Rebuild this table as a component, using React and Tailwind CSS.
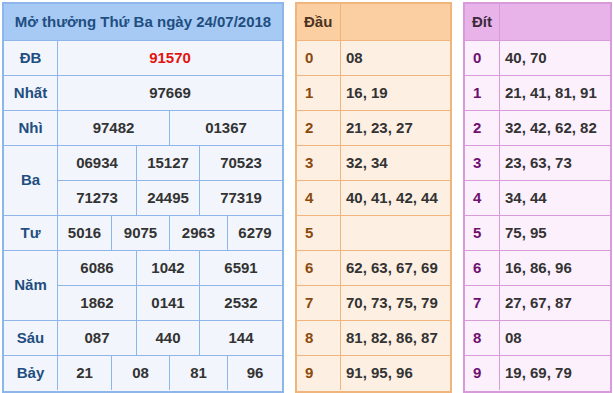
import React from "react";

const F = { fontFamily: '"Liberation Sans", Arial, sans-serif' };

function Cell({ children, className = "" }) {
  return (
    <div className={"flex items-center justify-center " + className}>{children}</div>
  );
}

function MainRow({ label, rows, cols, last }) {
  return (
    <div className={"flex " + (last ? "" : "border-b border-[#8fb6ea]")}>
      <div className="w-[54px] shrink-0 flex items-center justify-center border-r border-[#8fb6ea] text-[#1f4e80]">
        {label}
      </div>
      <div className="flex-1 flex flex-col">
        {rows.map((r, i) => (
          <div
            key={i}
            className={
              "grid h-[34px] " +
              cols +
              (i < rows.length - 1 ? " border-b border-[#8fb6ea] h-[35px]" : "")
            }
          >
            {r.map((v, j) => (
              <Cell
                key={j}
                className={
                  (j < r.length - 1 ? "border-r border-[#8fb6ea] " : "") +
                  (v.red ? "text-[#e3140e]" : "text-[#333]")
                }
              >
                {v.red ? v.t : v}
              </Cell>
            ))}
          </div>
        ))}
      </div>
    </div>
  );
}

function SideTable({ title, data, w, labelW, border, head, body, labelColor, headColor }) {
  return (
    <div className={"flex flex-col border-2 " + border + " " + body + " " + w}>
      <div className={"flex h-[37px] border-b " + border + " " + head}>
        <div className={"shrink-0 flex items-center pl-[7px] border-r " + border + " " + labelW + " " + headColor}>
          {title}
        </div>
        <div className="flex-1" />
      </div>
      {data.map((v, i) => (
        <div
          key={i}
          className={"flex " + (i < data.length - 1 ? "h-[35px] border-b " + border : "h-[34px]")}
        >
          <div className={"shrink-0 flex items-center pl-[8px] border-r " + border + " " + labelW + " " + labelColor}>
            {i}
          </div>
          <div className="flex-1 flex items-center pl-[5px] text-[#333]">{v}</div>
        </div>
      ))}
    </div>
  );
}

export default function App() {
  const c2 = "grid-cols-[112px_1fr]";
  const c3 = "grid-cols-[79px_63px_1fr]";
  const c4 = "grid-cols-[54px_58px_58px_1fr]";
  return (
    <div className="flex pl-[2px] pt-[2px] gap-[11px] text-[15px] font-bold bg-white w-[613px] h-[393px]" style={F}>
      <div className="w-[282px] flex flex-col border-2 border-[#8fb6ea] bg-[#f2f5fb]">
        <div className="h-[37px] flex items-center justify-center bg-[#a7caf4] border-b border-[#8fb6ea] text-[#1f4e80]">
          Mở thưởng Thứ Ba ngày 24/07/2018
        </div>
        <MainRow label="ĐB" cols="grid-cols-1" rows={[[{ t: "91570", red: true }]]} />
        <MainRow label="Nhất" cols="grid-cols-1" rows={[["97669"]]} />
        <MainRow label="Nhì" cols={c2} rows={[["97482", "01367"]]} />
        <MainRow label="Ba" cols={c3} rows={[["06934", "15127", "70523"], ["71273", "24495", "77319"]]} />
        <MainRow label="Tư" cols={c4} rows={[["5016", "9075", "2963", "6279"]]} />
        <MainRow label="Năm" cols={c3} rows={[["6086", "1042", "6591"], ["1862", "0141", "2532"]]} />
        <MainRow label="Sáu" cols={c3} rows={[["087", "440", "144"]]} />
        <MainRow label="Bảy" cols={c4} rows={[["21", "08", "81", "96"]]} last />
      </div>
      <SideTable
        title="Đầu"
        w="w-[157px]"
        labelW="w-[44px]"
        border="border-[#efb57c]"
        head="bg-[#fbcfa2]"
        body="bg-[#fdefe2]"
        labelColor="text-[#8a4a0c]"
        headColor="text-[#4a3320]"
        data={["08", "16, 19", "21, 23, 27", "32, 34", "40, 41, 42, 44", "", "62, 63, 67, 69", "70, 73, 75, 79", "81, 82, 86, 87", "91, 95, 96"]}
      />
      <SideTable
        title="Đít"
        w="w-[149px]"
        labelW="w-[35px]"
        border="border-[#d79adb]"
        head="bg-[#e7b3e9]"
        body="bg-[#fdf0fd]"
        labelColor="text-[#6e1070]"
        headColor="text-[#3a2a3a]"
        data={["40, 70", "21, 41, 81, 91", "32, 42, 62, 82", "23, 63, 73", "34, 44", "75, 95", "16, 86, 96", "27, 67, 87", "08", "19, 69, 79"]}
      />
    </div>
  );
}
